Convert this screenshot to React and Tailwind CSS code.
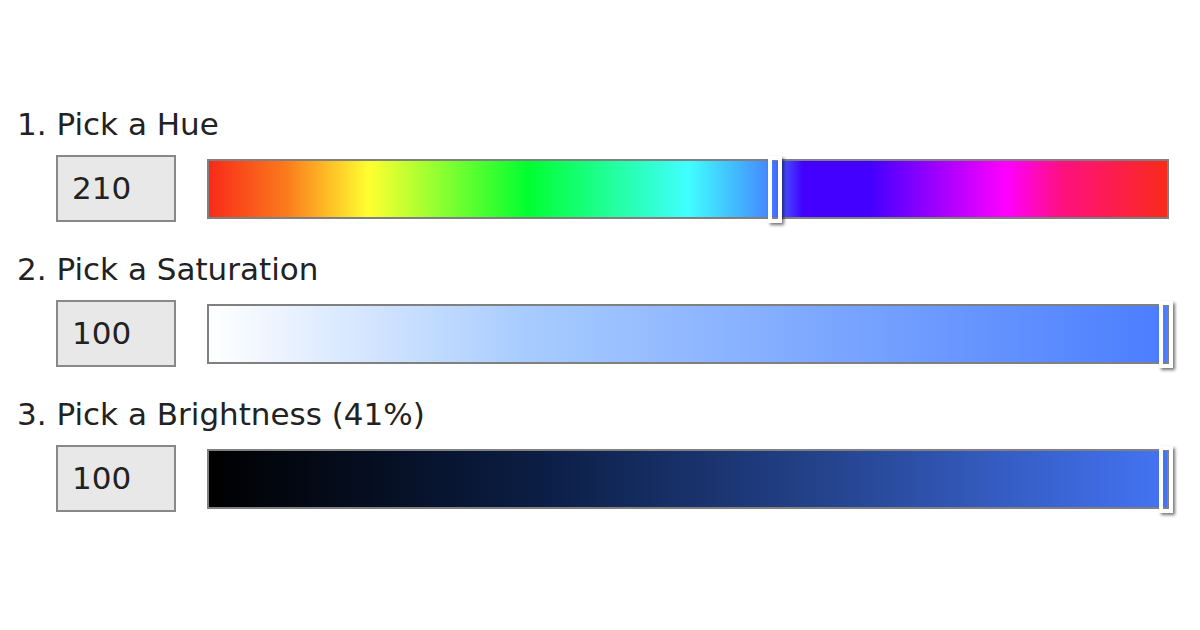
import React from 'react';

const sliders = [
  {
    label: '1. Pick a Hue',
    extra: null,
    value: '210',
    bar: 'bg-[linear-gradient(to_right,#f92a1a_0%,#fb7a1c_8%,#ffff30_16.7%,#00ff30_33.3%,#40ffff_50%,#4488ff_58.5%,#4400ff_62%,#4400ff_69%,#ff00ff_83.3%,#ff1080_89%,#f92a1a_100%)]',
    thumb: 'left-[559px]',
  },
  {
    label: '2. Pick a Saturation',
    extra: null,
    value: '100',
    bar: 'bg-[linear-gradient(to_right,#ffffff_0%,#a8ccff_33%,#4a7dff_100%)]',
    thumb: 'left-[950px]',
  },
  {
    label: '3. Pick a Brightness',
    extra: '(41%)',
    value: '100',
    bar: 'bg-[linear-gradient(to_right,#000000_0%,#0b1e45_35%,#25448e_65%,#4474f5_100%)]',
    thumb: 'left-[950px]',
  },
];

const Slider = ({ label, extra, value, bar, thumb }) => (
  <div className="mb-[27px]">
    <div className="h-[40px] leading-[40px] text-[31px] text-[#222]">
      {label}
      {extra && <span className="text-[31px]"> {extra}</span>}
    </div>
    <div className="mt-[11px] flex items-center gap-[31px] pl-[39px]">
      <div className="w-[120px] h-[67px] border-2 border-[#888] bg-[#e8e8e8] pl-[14px] flex items-center text-[31px] text-[#222]">
        {value}
      </div>
      <div className={`relative w-[962px] h-[60px] border-2 border-[#808080] ${bar}`}>
        <div className={`absolute top-[-5px] ${thumb} w-[14px] h-[67px] border-4 border-white shadow-[2px_2px_3px_rgba(0,0,0,0.55)]`} />
      </div>
    </div>
  </div>
);

export default function App() {
  return (
    <div className="w-[1200px] h-[630px] bg-white pt-[104px] pl-[17px] font-['DejaVu_Sans',sans-serif]">
      {sliders.map((s) => (
        <Slider key={s.label} {...s} />
      ))}
    </div>
  );
}
